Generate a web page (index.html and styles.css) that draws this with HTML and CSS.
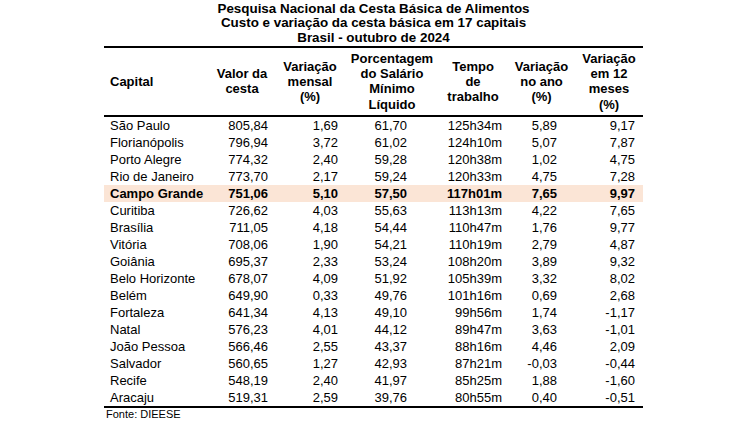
FILE: index.html
```html
<!DOCTYPE html>
<html lang="pt-BR">
<head>
<meta charset="utf-8">
<title>Pesquisa Nacional da Cesta Básica de Alimentos</title>
<link rel="stylesheet" href="styles.css">
</head>
<body>
<div class="report">
  <div class="title">
    <div>Pesquisa Nacional da Cesta Básica de Alimentos</div>
    <div>Custo e variação da cesta básica em 17 capitais</div>
    <div>Brasil - outubro de 2024</div>
  </div>
  <table class="cesta">
    <colgroup>
      <col class="c-cap"><col class="c-val"><col class="c-men"><col class="c-pct"><col class="c-tmp"><col class="c-ano"><col class="c-12m">
    </colgroup>
    <thead>
      <tr>
        <th class="h-cap">Capital</th>
        <th>Valor da<br>cesta</th>
        <th>Variação<br>mensal<br>(%)</th>
        <th>Porcentagem<br>do Salário<br>Mínimo<br>Líquido</th>
        <th>Tempo<br>de<br>trabalho</th>
        <th>Variação<br>no ano<br>(%)</th>
        <th>Variação<br>em 12<br>meses<br>(%)</th>
      </tr>
    </thead>
    <tbody>
      <tr><td>São Paulo</td><td>805,84</td><td>1,69</td><td>61,70</td><td>125h34m</td><td>5,89</td><td>9,17</td></tr>
      <tr><td>Florianópolis</td><td>796,94</td><td>3,72</td><td>61,02</td><td>124h10m</td><td>5,07</td><td>7,87</td></tr>
      <tr><td>Porto Alegre</td><td>774,32</td><td>2,40</td><td>59,28</td><td>120h38m</td><td>1,02</td><td>4,75</td></tr>
      <tr><td>Rio de Janeiro</td><td>773,70</td><td>2,17</td><td>59,24</td><td>120h33m</td><td>4,75</td><td>7,28</td></tr>
      <tr class="hl"><td>Campo Grande</td><td>751,06</td><td>5,10</td><td>57,50</td><td>117h01m</td><td>7,65</td><td>9,97</td></tr>
      <tr><td>Curitiba</td><td>726,62</td><td>4,03</td><td>55,63</td><td>113h13m</td><td>4,22</td><td>7,65</td></tr>
      <tr><td>Brasília</td><td>711,05</td><td>4,18</td><td>54,44</td><td>110h47m</td><td>1,76</td><td>9,77</td></tr>
      <tr><td>Vitória</td><td>708,06</td><td>1,90</td><td>54,21</td><td>110h19m</td><td>2,79</td><td>4,87</td></tr>
      <tr><td>Goiânia</td><td>695,37</td><td>2,33</td><td>53,24</td><td>108h20m</td><td>3,89</td><td>9,32</td></tr>
      <tr><td>Belo Horizonte</td><td>678,07</td><td>4,09</td><td>51,92</td><td>105h39m</td><td>3,32</td><td>8,02</td></tr>
      <tr><td>Belém</td><td>649,90</td><td>0,33</td><td>49,76</td><td>101h16m</td><td>0,69</td><td>2,68</td></tr>
      <tr><td>Fortaleza</td><td>641,34</td><td>4,13</td><td>49,10</td><td>99h56m</td><td>1,74</td><td>-1,17</td></tr>
      <tr><td>Natal</td><td>576,23</td><td>4,01</td><td>44,12</td><td>89h47m</td><td>3,63</td><td>-1,01</td></tr>
      <tr><td>João Pessoa</td><td>566,46</td><td>2,55</td><td>43,37</td><td>88h16m</td><td>4,46</td><td>2,09</td></tr>
      <tr><td>Salvador</td><td>560,65</td><td>1,27</td><td>42,93</td><td>87h21m</td><td>-0,03</td><td>-0,44</td></tr>
      <tr><td>Recife</td><td>548,19</td><td>2,40</td><td>41,97</td><td>85h25m</td><td>1,88</td><td>-1,60</td></tr>
      <tr class="last"><td>Aracaju</td><td>519,31</td><td>2,59</td><td>39,76</td><td>80h55m</td><td>0,40</td><td>-0,51</td></tr>
    </tbody>
  </table>
  <div class="source">Fonte: DIEESE</div>
</div>
</body>
</html>
```

FILE: styles.css
```css
html, body {
  margin: 0;
  padding: 0;
  background: #ffffff;
}

body {
  font-family: "Liberation Sans", Arial, sans-serif;
  color: #000000;
  width: 751px;
  height: 433px;
  overflow: hidden;
}

.report {
  margin-left: 104px;
  width: 539px;
  padding-top: 2px;
}

.title {
  text-align: center;
  font-size: 13.4px;
  font-weight: bold;
  line-height: 14.3px;
  padding-bottom: 1px;
}

.cesta {
  width: 539px;
  table-layout: fixed;
  border-collapse: separate;
  border-spacing: 0;
  font-size: 13px;
}

.c-cap { width: 106px; }
.c-val { width: 64px; }
.c-men { width: 72px; }
.c-pct { width: 92px; }
.c-tmp { width: 70px; }
.c-ano { width: 67px; }
.c-12m { width: 68px; }

.cesta th {
  font-weight: bold;
  text-align: center;
  vertical-align: middle;
  line-height: 15.3px;
  padding: 3px 0;
  border-top: 2px solid #000;
  border-bottom: 2px solid #000;
}

.cesta th.h-cap {
  text-align: left;
  padding-left: 6px;
}

.cesta td {
  height: 17px;
  line-height: 17px;
  padding: 0;
  text-align: right;
  white-space: nowrap;
}

.cesta td:nth-child(1) { text-align: left; padding-left: 6px; }
.cesta td:nth-child(2) { padding-right: 6px; }
.cesta td:nth-child(3) { padding-right: 8px; }
.cesta td:nth-child(4) { padding-right: 31px; }
.cesta td:nth-child(5) { padding-right: 6px; }
.cesta td:nth-child(6) { padding-right: 18px; }
.cesta td:nth-child(7) { padding-right: 8px; }

.cesta tr.hl td {
  background: #fbe5d6;
  font-weight: bold;
}

.cesta tr.last td {
  border-bottom: 2px solid #000;
}

.source {
  font-size: 11px;
  line-height: 12px;
  padding-left: 2px;
}
```
